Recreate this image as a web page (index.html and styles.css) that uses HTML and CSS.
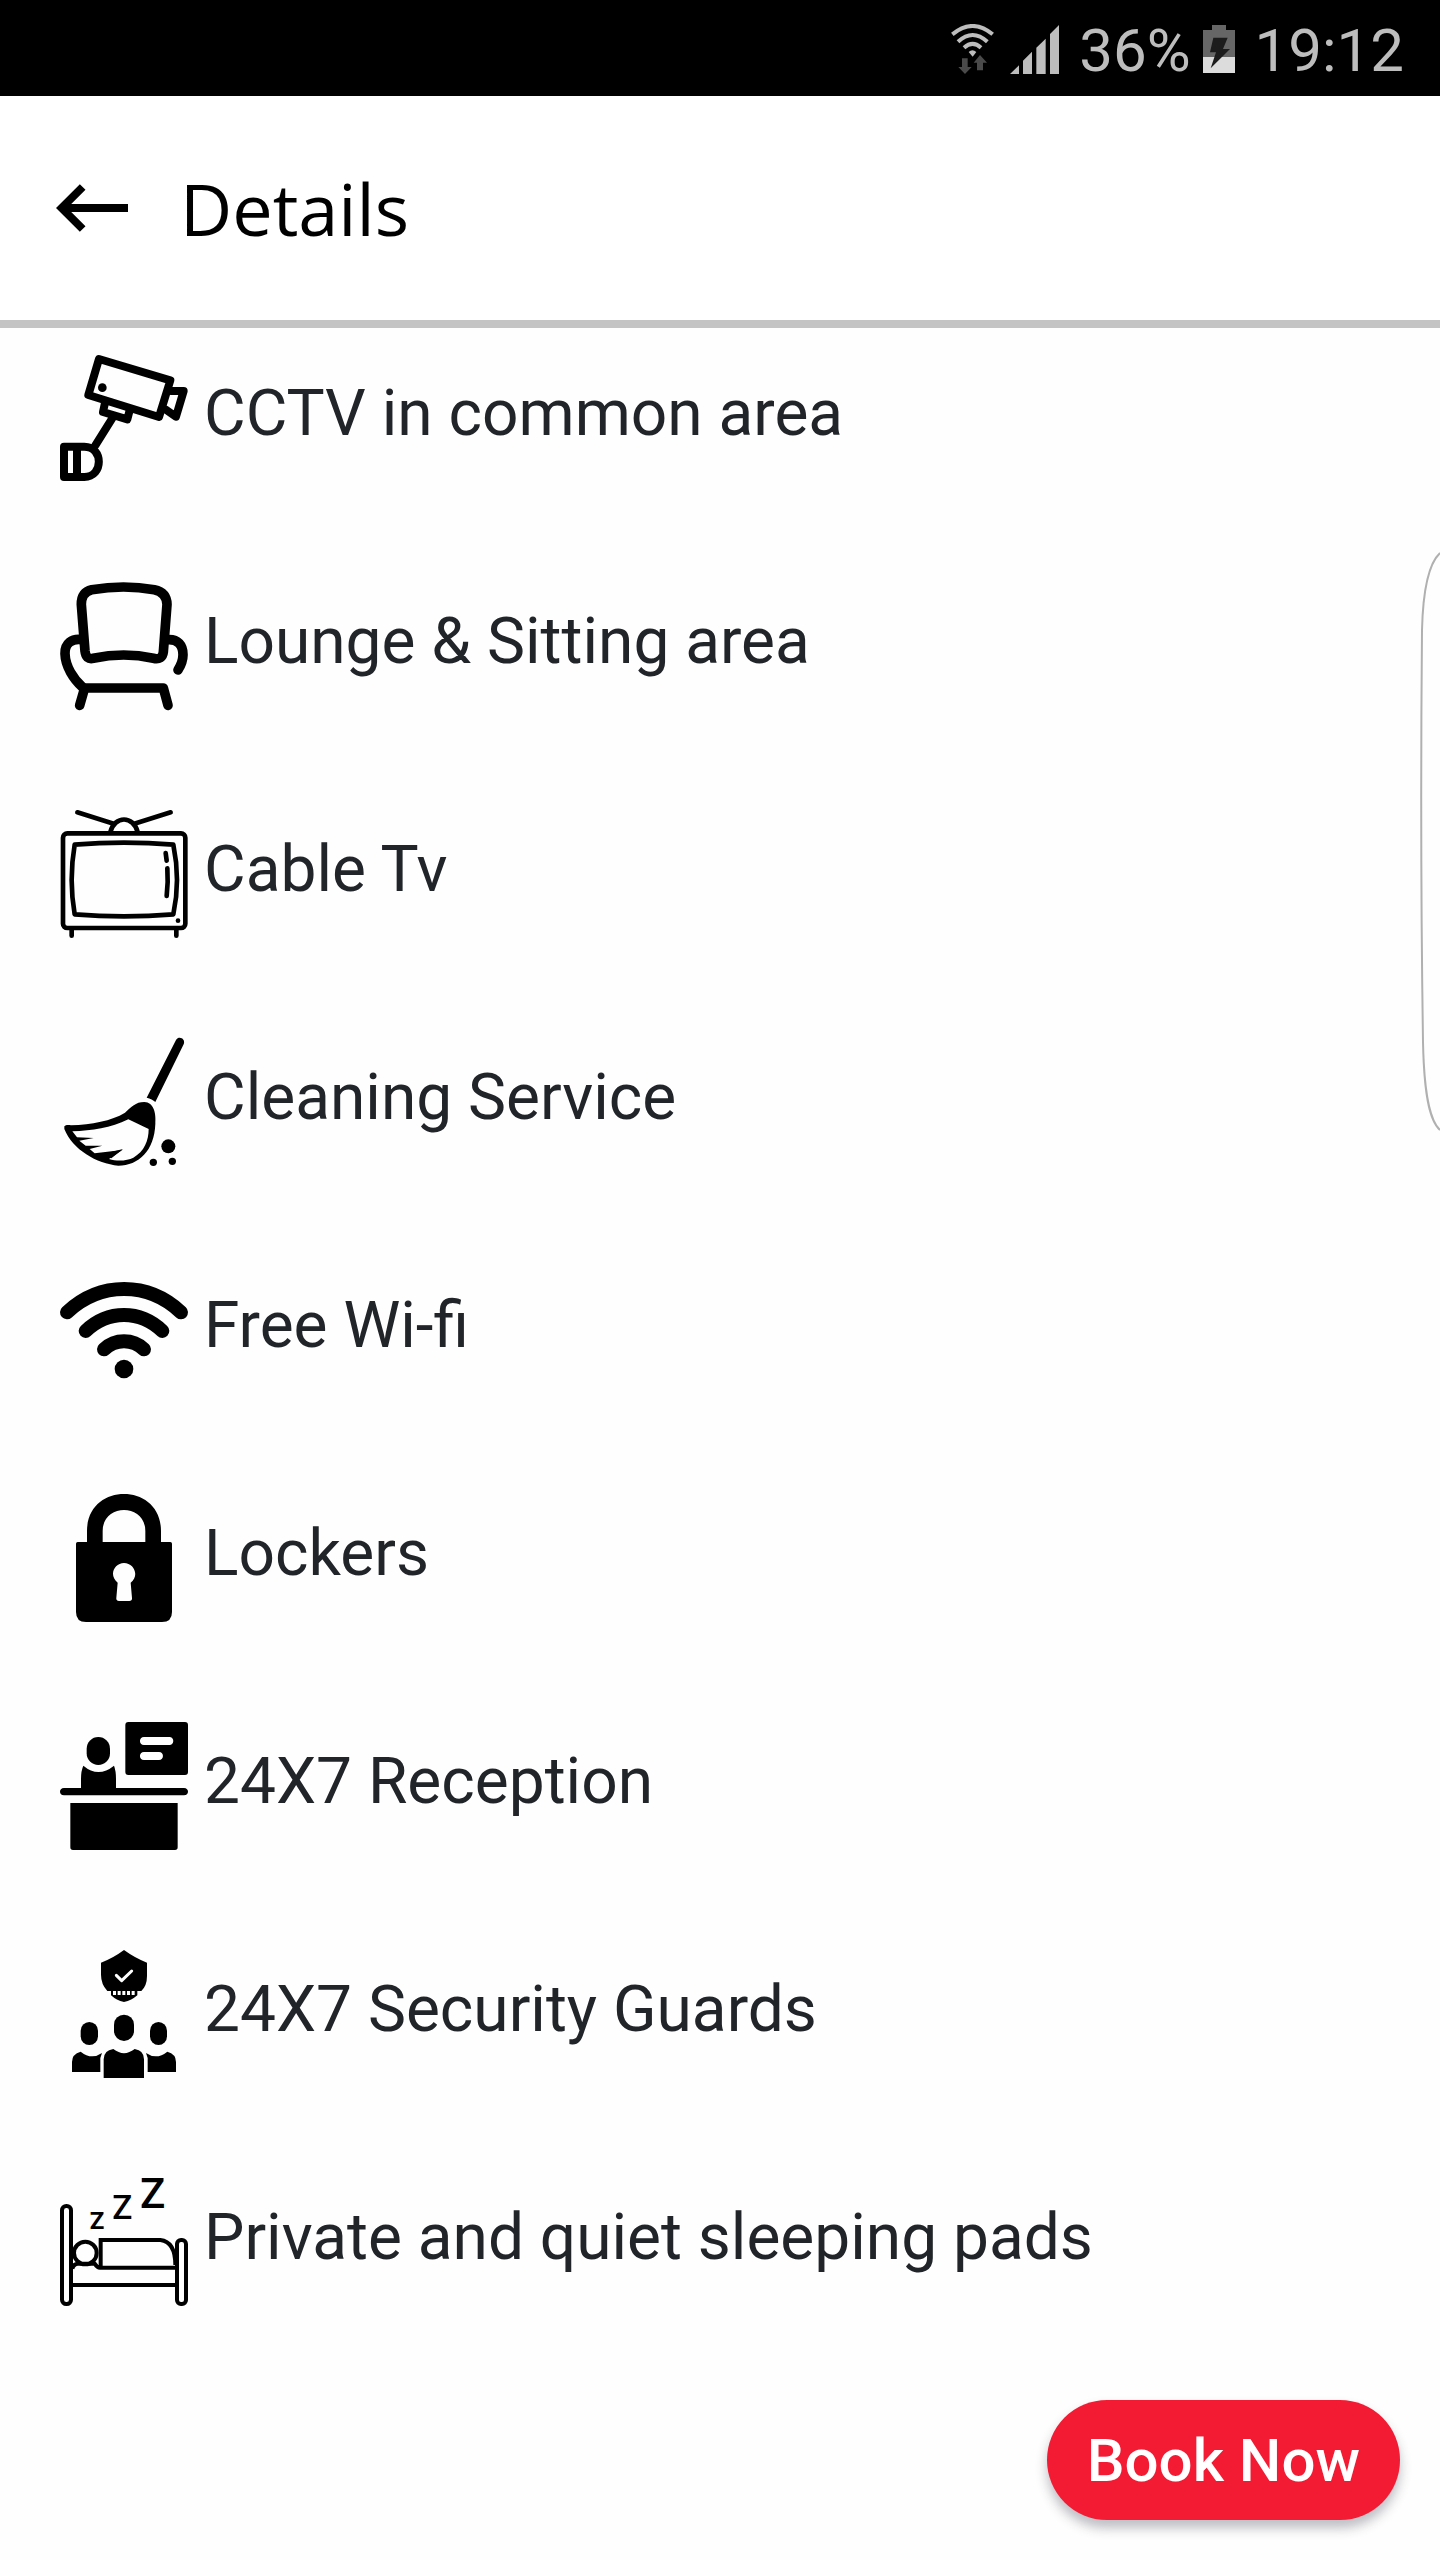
FILE: index.html
```html
<!DOCTYPE html>
<html lang="en">
<head>
<meta charset="utf-8">
<meta name="viewport" content="width=device-width, initial-scale=1">
<title>Details</title>
<link rel="stylesheet" href="styles.css">
</head>
<body>
<div class="status-bar">
  <svg class="status-wifi" viewBox="63 72 129 150" aria-hidden="true">
    <g fill="none" stroke="#bdbdbd" stroke-width="12">
      <path d="M67 103Q128 53 188 103"/>
      <path d="M84 125Q128 85 172 125"/>
      <path d="M102 143Q128 120 153 143"/>
    </g>
    <path fill="#bdbdbd" d="M116 156Q127 145 139 156L128 170Z"/>
    <path fill="#4a4a4a" d="M96 175h17v26h12l-20 21-20-21h11zM150 165l21 23h-12v23h-18v-23h-10z"/>
  </svg>
  <svg class="status-signal" viewBox="240 72 147 147" aria-hidden="true">
    <path fill="#bdbdbd" d="M240 219l27-26v26zM279 219v-40l27-27v67zM319 219v-79l28-27v106zM360 219V99l27-27v147z"/>
  </svg>
  <span class="status-text">36%</span>
  <svg class="status-battery" viewBox="819 75 96 144" aria-hidden="true">
    <path fill="#666" d="M846 75h42v15h27v82h-96V90h27z"/>
    <path fill="#dcdcdc" d="M819 171h96v48h-96z"/>
    <path fill="#1c1c1c" d="M850 113h43l-14 34h21l-58 58 16-48h-18z"/>
  </svg>
  <time class="status-text">19:12</time>
</div>

<header class="app-bar">
  <button class="back-button" type="button" aria-label="Back">
    <svg viewBox="168 102 216 144" aria-hidden="true"><path d="M384 174H188M248 111l-63 63 63 63" fill="none" stroke="#000" stroke-width="24"/></svg>
  </button>
  <h1 class="app-title">Details</h1>
</header>

<main>
  <ul class="amenities">
    <li class="amenity">
      <svg class="icon line" viewBox="60 42 384 384" aria-hidden="true">
        <g stroke-width="24">
          <path d="M177 57l214 64-34 110-212-66z"/>
          <path d="M393 153h38l-23 77-30-21"/>
          <path d="M196 184l-7 32 73 22 8-31"/>
          <path d="M220 230l-54 86"/>
          <path d="M72 320h61c58 0 58 91 0 91H72zM111 320v91"/>
        </g>
        <circle class="solid" cx="187" cy="143" r="13"/>
      </svg>
      <span>CCTV in common area</span>
    </li>
    <li class="amenity">
      <svg class="icon line" viewBox="60 726 384 384" aria-hidden="true">
        <g stroke-width="29">
          <path d="M155 749Q252 733 343 749Q380 757 381 793L370 936Q367 961 340 955Q252 935 160 955Q138 960 135 933L124 793Q124 756 155 749Z"/>
          <path d="M127 899c-32-5-53 11-52 42 1 39 26 77 53 101"/>
          <path d="M383 899c31-2 46 17 46 45 0 17-7 33-15 46"/>
          <path d="M119 1096l15-52h236l14 52"/>
        </g>
      </svg>
      <span>Lounge &amp; Sitting area</span>
    </li>
    <li class="amenity">
      <svg class="icon line" viewBox="60 60 384 384" aria-hidden="true">
        <g stroke-width="14">
          <rect x="69" y="130" width="367" height="284" rx="13"/>
          <path d="M104 164Q252 152 400 164Q422 270 400 373Q252 385 104 373Q86 270 104 164Z"/>
          <path d="M211 126c13-50 69-50 82 0M221 101L112 67M283 101l109-34"/>
          <path d="M95 417v20M409 417v20"/>
          <path d="M377 189l3 23M382 235q3 42-2 83"/>
        </g>
        <circle class="solid" cx="414" cy="392" r="7"/>
      </svg>
      <span>Cable Tv</span>
    </li>
    <li class="amenity">
      <svg class="icon" viewBox="60 744 384 384" aria-hidden="true">
        <path d="M408 750c9-14 30-3 23 13l-85 173c-6-6-15-10-26-13z"/>
        <path fill-rule="evenodd" d="M73 1009c5-5 12-4 20-3 62-3 121-13 162-38 20-17 31-32 58-32 28 1 36 33 33 66-3 80-50 125-111 125-65-6-137-48-162-110zM97 1024l14 18 50 2-43 8 19 15 50 0-38 10 15 13 83-10-40 27c26 8 55 5 73-4 33-19 46-51 46-86l-61-29c-53 26-109 34-168 36z"/>
        <path d="M190 1092l59-15-35 28z"/>
        <circle cx="385" cy="1069" r="21"/>
        <circle cx="340" cy="1117" r="11"/>
        <circle cx="397" cy="1114" r="11"/>
      </svg>
      <span>Cleaning Service</span>
    </li>
    <li class="amenity">
      <svg class="icon line" viewBox="60 18 384 384" aria-hidden="true">
        <g stroke-width="42">
          <path d="M81 157C181 64 324 64 423 157"/>
          <path d="M137 213C204 149 300 149 367 213"/>
          <path d="M192 268C226 236 278 236 312 268"/>
        </g>
        <circle class="solid" cx="252" cy="327" r="28"/>
      </svg>
      <span>Free Wi-fi</span>
    </li>
    <li class="amenity">
      <svg class="icon" viewBox="60 702 384 384" aria-hidden="true">
        <path fill-rule="evenodd" d="M141 846v-33c0-148 222-148 222 0v33h28q5 0 5 5v205q0 30-30 30H138q-30 0-30-30V851q0-5 5-5zM188 846h128v-33c0-84-128-84-128 0zM233 968l-4 46q-1 9 8 9h31q9 0 8-9l-4-46c28-22 9-59-20-59s-47 37-19 59z"/>
      </svg>
      <span>Lockers</span>
    </li>
    <li class="amenity">
      <svg class="icon" viewBox="60 66 384 384" aria-hidden="true">
        <path fill-rule="evenodd" d="M265 66h170q9 0 9 9v141q0 9-9 9H265q-9 0-9-9V75q0-9 9-9zM312 111c-16 0-16 24 0 24h76c16 0 16-24 0-24zM312 156c-16 0-16 24 0 24h45c16 0 16-24 0-24z"/>
        <rect x="140" y="111" width="70" height="84" rx="35"/>
        <path d="M130 197q45 38 92 0q6 15 6 40v27h204c16 0 16 22 0 22H72c-16 0-16-22 0-22h51v-27q0-25 7-40zM91 309h322v133q0 8-8 8H99q-8 0-8-8z"/>
      </svg>
      <span>24X7 Reception</span>
    </li>
    <li class="amenity">
      <svg class="icon" viewBox="60 750 384 384" aria-hidden="true">
        <path d="M252 750q33 24 69 38v40q0 29-17 45H202q-19-21-19-49v-36q37-14 69-38zM213 873h79v13q-17 15-40 20-23-5-39-20z"/>
        <path d="M229 826l16 16 30-29" fill="none" stroke="#fff" stroke-width="9" stroke-linecap="round" stroke-linejoin="round"/>
        <path d="M219 879h68" fill="none" stroke="#fff" stroke-width="12" stroke-dasharray="9 5"/>
        <rect x="222" y="944" width="60" height="79" rx="30"/>
        <rect x="122" y="966" width="52" height="69" rx="26"/>
        <rect x="330" y="966" width="51" height="69" rx="26"/>
        <path d="M191 1134v-56q0-27 29-31 32 25 64 0 28 4 28 31v56zM96 1116v-30q0-24 26-31 32 26 64 4l-5 15v42zM408 1116v-30q0-24-26-31-32 26-64 4l5 15v42z"/>
      </svg>
      <span>24X7 Security Guards</span>
    </li>
    <li class="amenity">
      <svg class="icon" viewBox="60 84 384 384" aria-hidden="true">
        <g fill="none" stroke="#000" stroke-width="12">
          <rect x="66" y="168" width="27" height="294" rx="13"/>
          <rect x="411" y="270" width="27" height="192" rx="12"/>
          <circle cx="136" cy="309" r="34"/>
          <path d="M99 405h306M97 356q4-15 17-15h50q9 14 18 12V270h179q45 5 45 75M176 353h229"/>
        </g>
        <text class="snore snore-small" x="149" y="237">Z</text>
        <text class="snore snore-medium" x="217" y="206">Z</text>
        <text class="snore snore-large" x="300" y="174">Z</text>
      </svg>
      <span>Private and quiet sleeping pads</span>
    </li>
  </ul>
</main>

<button class="book-button" type="button">Book Now</button>

<svg class="edge-handle" viewBox="0 0 20 580" aria-hidden="true">
  <path d="M20 1C8 12 3 38 2 78Q0 290 3 490C4 540 9 568 20 578" fill="none" stroke="#b0b0b0" stroke-width="2"/>
</svg>
</body>
</html>
```
FILE: styles.css
```css
* {
  box-sizing: border-box;
}

body {
  margin: 0;
  min-height: 100vh;
  background: #fefefe;
  color: #212529;
  font-family: Roboto, sans-serif;
}

button {
  border: 0;
  padding: 0;
  font-family: inherit;
  cursor: pointer;
}

svg {
  display: block;
  flex: none;
}

.status-bar {
  display: flex;
  align-items: center;
  justify-content: flex-end;
  height: 96px;
  padding: 2px 36px 0 0;
  background: #000;
  color: #bdbdbd;
  font-size: 60px;
  line-height: 72px;
}

.status-text {
  padding-top: 4px;
}

.status-wifi {
  width: 43px;
  height: 50px;
  margin-right: 16px;
}

.status-signal {
  width: 49px;
  height: 49px;
  margin-right: 20px;
}

.status-battery {
  width: 32px;
  height: 48px;
  margin: 0 20px 0 12px;
}

.app-bar {
  display: flex;
  align-items: center;
  gap: 52px;
  height: 232px;
  padding: 0 56px;
  border-bottom: 8px solid #c4c4c4;
  background: #fff;
  color: #000;
}

.back-button {
  background: none;
}

.back-button svg {
  width: 72px;
  height: 48px;
}

.app-title {
  margin: 0;
  font: 400 72px/96px "Open Sans", sans-serif;
}

.amenities {
  display: flex;
  flex-direction: column;
  gap: 100px;
  margin: 0;
  padding: 26px 60px 254px;
  list-style: none;
  font-size: 64px;
  line-height: 76px;
}

.amenity {
  display: flex;
  align-items: center;
  gap: 16px;
}

.amenity span {
  padding-bottom: 8px;
}

.icon {
  width: 128px;
  height: 128px;
  overflow: visible;
  fill: #000;
}

.line {
  fill: none;
  stroke: #000;
  stroke-linecap: round;
  stroke-linejoin: round;
}

.solid {
  fill: #000;
  stroke: none;
}

.snore {
  font-weight: 500;
}

.snore-small {
  font-size: 72px;
  font-weight: 700;
}

.snore-medium {
  font-size: 100px;
}

.snore-large {
  font-size: 126px;
}

.book-button {
  position: fixed;
  right: 40px;
  bottom: 40px;
  height: 120px;
  padding: 2px 40px 0;
  border-radius: 60px;
  background: #f21b33;
  box-shadow: 0 8px 12px rgba(40, 40, 60, 0.3);
  color: #fff;
  font-size: 60px;
  font-weight: 500;
  line-height: 72px;
}

.edge-handle {
  position: fixed;
  top: 552px;
  right: 0;
  width: 20px;
  height: 580px;
}
```
